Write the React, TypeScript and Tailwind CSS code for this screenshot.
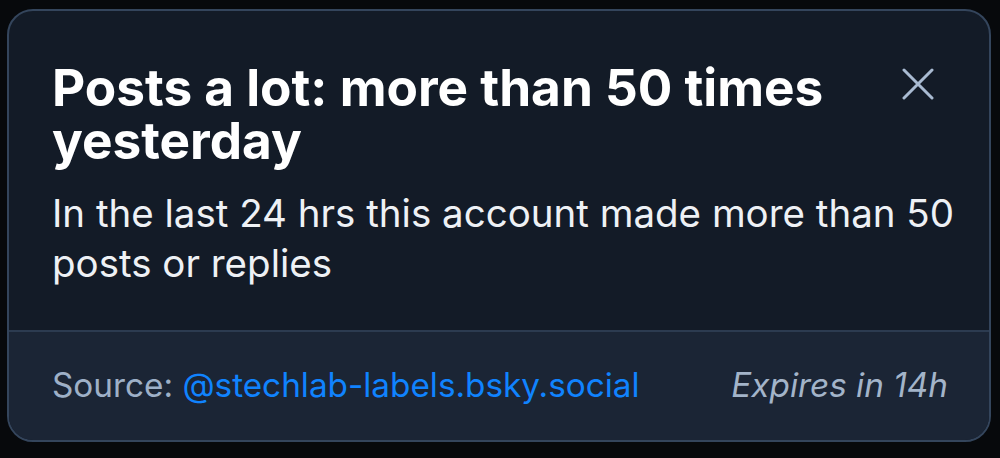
export default function App() {
  return (
    <div className="w-[1000px] h-[458px] bg-[#07090c] pt-[9px] pl-[7px] overflow-hidden">
      <div
        className="w-[984px] h-[433px] rounded-[26px] border-2 border-[#34455c] bg-[#131b27] flex flex-col overflow-hidden"
        style={{ fontFamily: "Inter, 'Noto Sans', sans-serif" }}
      >
        <div className="flex-1 pl-[43px] pr-[24px] pt-[50px]">
          <div className="flex items-start">
            <h1 className="flex-1 text-[51.3px] leading-[53px] font-bold text-white">
              Posts a lot: more than 50 times yesterday
            </h1>
            <button className="mt-[7px] mr-[31px] ml-[20px] text-[#a9bbd2]">
              <svg width="32" height="32" viewBox="0 0 32 32" fill="none" stroke="currentColor" strokeWidth="3" strokeLinecap="round">
                <path d="M2 2 L30 30 M30 2 L2 30" />
              </svg>
            </button>
          </div>
          <p className="mt-[21px] text-[38.5px] leading-[50px] text-[#eef1f5]">
            In the last 24 hrs this account made more than 50 posts or replies
          </p>
        </div>
        <div className="h-[110px] border-t-2 border-[#2c3b50] bg-[#1b2535] flex items-center justify-between pl-[43px] pr-[41px]">
          <div className="text-[33.3px] text-[#9eb0c7]">
            Source: <span className="text-[#1083fe]">@stechlab-labels.bsky.social</span>
          </div>
          <div className="text-[33.3px] italic text-[#a3b4c9]">Expires in 14h</div>
        </div>
      </div>
    </div>
  );
}
